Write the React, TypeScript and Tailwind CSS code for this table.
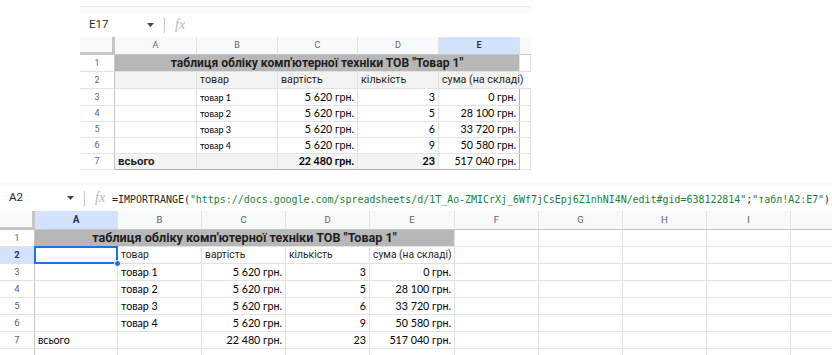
import React from 'react';

// gridline + cell helpers
const g = 'border-r border-b border-[#e2e2e2]';
const rh = 'flex items-center justify-center border-r border-b border-r-[#c4c7c5] border-b-[#e2e2e2] text-[#5f6368]';
const num = "font-['Lato',sans-serif] text-black";
const ui = "font-['Roboto',sans-serif]";

function Tri() {
  return (
    <svg width="7" height="4" viewBox="0 0 7 4" className="shrink-0">
      <path d="M0 0h7L3.5 4z" fill="#444746" />
    </svg>
  );
}

function FormulaBar({ name, className, children }: { name: string; className: string; children?: React.ReactNode }) {
  return (
    <div className={`flex items-center ${ui} ${className}`}>
      <div className="w-[67px] shrink-0 pl-[9px] text-[11.5px] text-[#1f1f1f]">{name}</div>
      <Tri />
      <div className="ml-[10px] h-[15px] w-px shrink-0 bg-[#c4c7c5]" />
      <span className="ml-[10px] font-['Liberation_Serif',serif] text-[14px] italic leading-none text-[#b4b7bb]">fx</span>
      <div className="ml-[7px] min-w-0 whitespace-nowrap">{children}</div>
    </div>
  );
}

const topRows = [
  { n: '3', item: 'товар 1', price: '5 620 грн.', qty: '3', sum: '0 грн.' },
  { n: '4', item: 'товар 2', price: '5 620 грн.', qty: '5', sum: '28 100 грн.' },
  { n: '5', item: 'товар 3', price: '5 620 грн.', qty: '6', sum: '33 720 грн.' },
  { n: '6', item: 'товар 4', price: '5 620 грн.', qty: '9', sum: '50 580 грн.' },
];

const title = 'таблиця обліку комп\'ютерної техніки ТОВ "Товар 1"';

function TopSheet() {
  return (
    <div className="ml-[80px] w-[451px]">
      <div className="mt-[6px] h-[7px] border-t border-[#e8eaed] bg-[#f9fbfd]" />
      <FormulaBar name="E17" className="h-[24px]" />
      <div className="grid grid-cols-[35px_82px_81px_80px_81px_81px_11px] grid-rows-[18px_17px_17px_17px_16px_16px_16px_16px] text-[11px] leading-none">
        {/* column headers */}
        <div className="border-r-[3px] border-b-[3px] border-[#c4c7c5] bg-[#f8f9fa]" />
        {['A', 'B', 'C', 'D'].map((c) => (
          <div key={c} className={`flex items-center justify-center border-r border-b border-r-[#e2e2e2] border-b-[#c4c7c5] bg-[#f8f9fa] ${ui} text-[9px] text-[#5f6368]`}>{c}</div>
        ))}
        <div className={`flex items-center justify-center border-r border-b border-r-[#e2e2e2] border-b-[#c4c7c5] bg-[#d3e3fd] ${ui} text-[9px] font-bold text-[#1f3760]`}>E</div>
        <div className="border-b border-[#c4c7c5] bg-[#f8f9fa]" />

        {/* row 1 */}
        <div className={`${rh} ${ui} text-[9px]`}>1</div>
        <div className={`col-span-5 flex items-center justify-center whitespace-nowrap border-b border-r border-[#e2e2e2] bg-[#b7b7b7] ${ui} text-[12.1px] font-bold text-[#1f1f1f]`}>{title}</div>
        <div className={g} />

        {/* row 2 */}
        <div className={`${rh} ${ui} text-[9px]`}>2</div>
        <div className={`${g} bg-[#f3f3f3]`} />
        <div className={`${g} flex items-center bg-[#f3f3f3] px-[3px] ${ui} text-[10.7px] text-[#1f1f1f]`}>товар</div>
        <div className={`${g} flex items-center bg-[#f3f3f3] px-[3px] ${ui} text-[10.7px] text-[#1f1f1f]`}>вартість</div>
        <div className={`${g} flex items-center bg-[#f3f3f3] px-[3px] ${ui} text-[10.7px] text-[#1f1f1f]`}>кількість</div>
        <div className={`flex items-center whitespace-nowrap border-b border-[#e2e2e2] bg-[#f3f3f3] px-[3px] ${ui} text-[10.7px] text-[#1f1f1f]`}>сума (на складі)</div>
        <div className="border-b border-[#e2e2e2]" />

        {topRows.map((r) => (
          <React.Fragment key={r.n}>
            <div className={`${rh} ${ui} text-[9px]`}>{r.n}</div>
            <div className={g} />
            <div className={`${g} flex items-center px-[3px] ${num} text-[9px] text-[#333]`}>{r.item}</div>
            <div className={`${g} flex items-center justify-end px-[3px] ${num} text-[10.7px]`}>{r.price}</div>
            <div className={`${g} flex items-center justify-end px-[3px] ${num} text-[10.7px]`}>{r.qty}</div>
            <div className={`flex items-center justify-end border-b border-r border-b-[#e2e2e2] border-r-[#b0b0b0] px-[3px] ${num} text-[10.7px]`}>{r.sum}</div>
            <div className={g} />
          </React.Fragment>
        ))}

        {/* row 7 */}
        <div className={`${rh} ${ui} text-[9px]`}>7</div>
        <div className={`flex items-center border-r border-b border-r-[#e2e2e2] border-b-[#b0b0b0] bg-[#f3f3f3] px-[3px] ${ui} text-[11.5px] font-bold text-[#1f1f1f]`}>всього</div>
        <div className="border-r border-b border-r-[#e2e2e2] border-b-[#b0b0b0] bg-[#f3f3f3]" />
        <div className={`flex items-center justify-end border-r border-b border-r-[#e2e2e2] border-b-[#b0b0b0] bg-[#f3f3f3] px-[3px] ${num} text-[10.7px] font-bold`}>22 480 грн.</div>
        <div className={`flex items-center justify-end border-r border-b border-r-[#e2e2e2] border-b-[#b0b0b0] bg-[#f3f3f3] px-[3px] ${num} text-[10.7px] font-bold`}>23</div>
        <div className={`flex items-center justify-end border-r border-b border-[#b0b0b0] px-[3px] ${num} text-[10.7px]`}>517 040 грн.</div>
        <div className={g} />
      </div>
    </div>
  );
}

const botRows = [
  { n: '3', a: '', item: 'товар 1', price: '5 620 грн.', qty: '3', sum: '0 грн.' },
  { n: '4', a: '', item: 'товар 2', price: '5 620 грн.', qty: '5', sum: '28 100 грн.' },
  { n: '5', a: '', item: 'товар 3', price: '5 620 грн.', qty: '6', sum: '33 720 грн.' },
  { n: '6', a: '', item: 'товар 4', price: '5 620 грн.', qty: '9', sum: '50 580 грн.' },
  { n: '7', a: 'всього', item: '', price: '22 480 грн.', qty: '23', sum: '517 040 грн.' },
];

const rest = ['F', 'G', 'H', 'I', 'J'];

function Empties() {
  return (
    <>
      {rest.map((c) => (
        <div key={c} className={g} />
      ))}
    </>
  );
}

function BottomSheet() {
  return (
    <div className="mt-[12px] w-full overflow-hidden">
      <div className="h-[3px] bg-[#f6f8fb]" />
      <FormulaBar name="A2" className="h-[26px]">
        <span className="font-['DejaVu_Sans_Mono',monospace] text-[9.95px] text-[#1f1f1f]">
          =IMPORTRANGE(
          <span className="text-[#188038]">"https://docs.google.com/spreadsheets/d/1T_Ao-ZMICrXj_6Wf7jCsEpj6Z1nhNI4N/edit#gid=638122814"</span>
          ;<span className="text-[#188038]">"табл!A2:E7"</span>)
        </span>
      </FormulaBar>
      <div className="grid w-[880px] grid-cols-[35px_83px_84px_84px_84px_85px_84px_84px_84px_84px_84px] grid-rows-[19px_17px_17px_17px_17px_17px_17px_17px_17px] text-[11px] leading-none">
        <div className="border-r-[3px] border-b-[3px] border-[#c4c7c5] bg-[#f8f9fa]" />
        <div className={`flex items-center justify-center border-r border-b border-r-[#e2e2e2] border-b-[#c4c7c5] bg-[#d3e3fd] ${ui} text-[10px] font-bold text-[#1f3760]`}>A</div>
        {['B', 'C', 'D', 'E', 'F', 'G', 'H', 'I'].map((c) => (
          <div key={c} className={`flex items-center justify-center border-r border-b border-r-[#e2e2e2] border-b-[#c4c7c5] bg-[#f8f9fa] ${ui} text-[9.5px] text-[#5f6368]`}>{c}</div>
        ))}
        <div className="border-r border-b border-r-[#e2e2e2] border-b-[#c4c7c5] bg-[#f8f9fa]" />

        {/* row 1 */}
        <div className={`${rh} ${ui} text-[9.5px]`}>1</div>
        <div className={`col-span-5 flex items-center justify-center whitespace-nowrap border-b border-r border-[#e2e2e2] bg-[#b7b7b7] ${ui} text-[12.6px] font-bold text-[#1f1f1f]`}>{title}</div>
        <Empties />

        {/* row 2 */}
        <div className={`flex items-center justify-center border-r border-b border-r-[#c4c7c5] border-b-[#e2e2e2] bg-[#d3e3fd] ${ui} text-[9.5px] font-bold text-[#1f3760]`}>2</div>
        <div className="relative border-r border-b border-[#e2e2e2]">
          <div className="absolute -top-px -left-px -right-px -bottom-px border-2 border-[#1a73e8]" />
          <div className="absolute -right-[4px] -bottom-[4px] h-[7px] w-[7px] rounded-full border border-white bg-[#1a73e8]" />
        </div>
        <div className={`${g} flex items-center px-[3px] ${ui} text-[10.3px] text-[#1f1f1f]`}>товар</div>
        <div className={`${g} flex items-center px-[3px] ${ui} text-[10.3px] text-[#1f1f1f]`}>вартість</div>
        <div className={`${g} flex items-center px-[3px] ${ui} text-[10.3px] text-[#1f1f1f]`}>кількість</div>
        <div className={`${g} flex items-center whitespace-nowrap px-[3px] ${ui} text-[10.3px] text-[#1f1f1f]`}>сума (на складі)</div>
        <Empties />

        {botRows.map((r) => (
          <React.Fragment key={r.n}>
            <div className={`${rh} ${ui} text-[9.5px]`}>{r.n}</div>
            <div className={`${g} flex items-center px-[3px] ${num} text-[10.7px]`}>{r.a}</div>
            <div className={`${g} flex items-center px-[3px] ${num} text-[10.7px]`}>{r.item}</div>
            <div className={`${g} flex items-center justify-end px-[3px] ${num} text-[10.7px]`}>{r.price}</div>
            <div className={`${g} flex items-center justify-end px-[3px] ${num} text-[10.7px]`}>{r.qty}</div>
            <div className={`${g} flex items-center justify-end px-[3px] ${num} text-[10.7px]`}>{r.sum}</div>
            <Empties />
          </React.Fragment>
        ))}

        {/* row 8, cut off at the bottom edge */}
        <div className="border-r border-b border-r-[#c4c7c5] border-b-[#e2e2e2]" />
        <div className={g} />
        <div className={g} />
        <div className={g} />
        <div className={g} />
        <div className={g} />
        <Empties />
      </div>
    </div>
  );
}

export default function App() {
  return (
    <div className="h-[355px] w-[832px] overflow-hidden bg-white">
      <TopSheet />
      <BottomSheet />
    </div>
  );
}
